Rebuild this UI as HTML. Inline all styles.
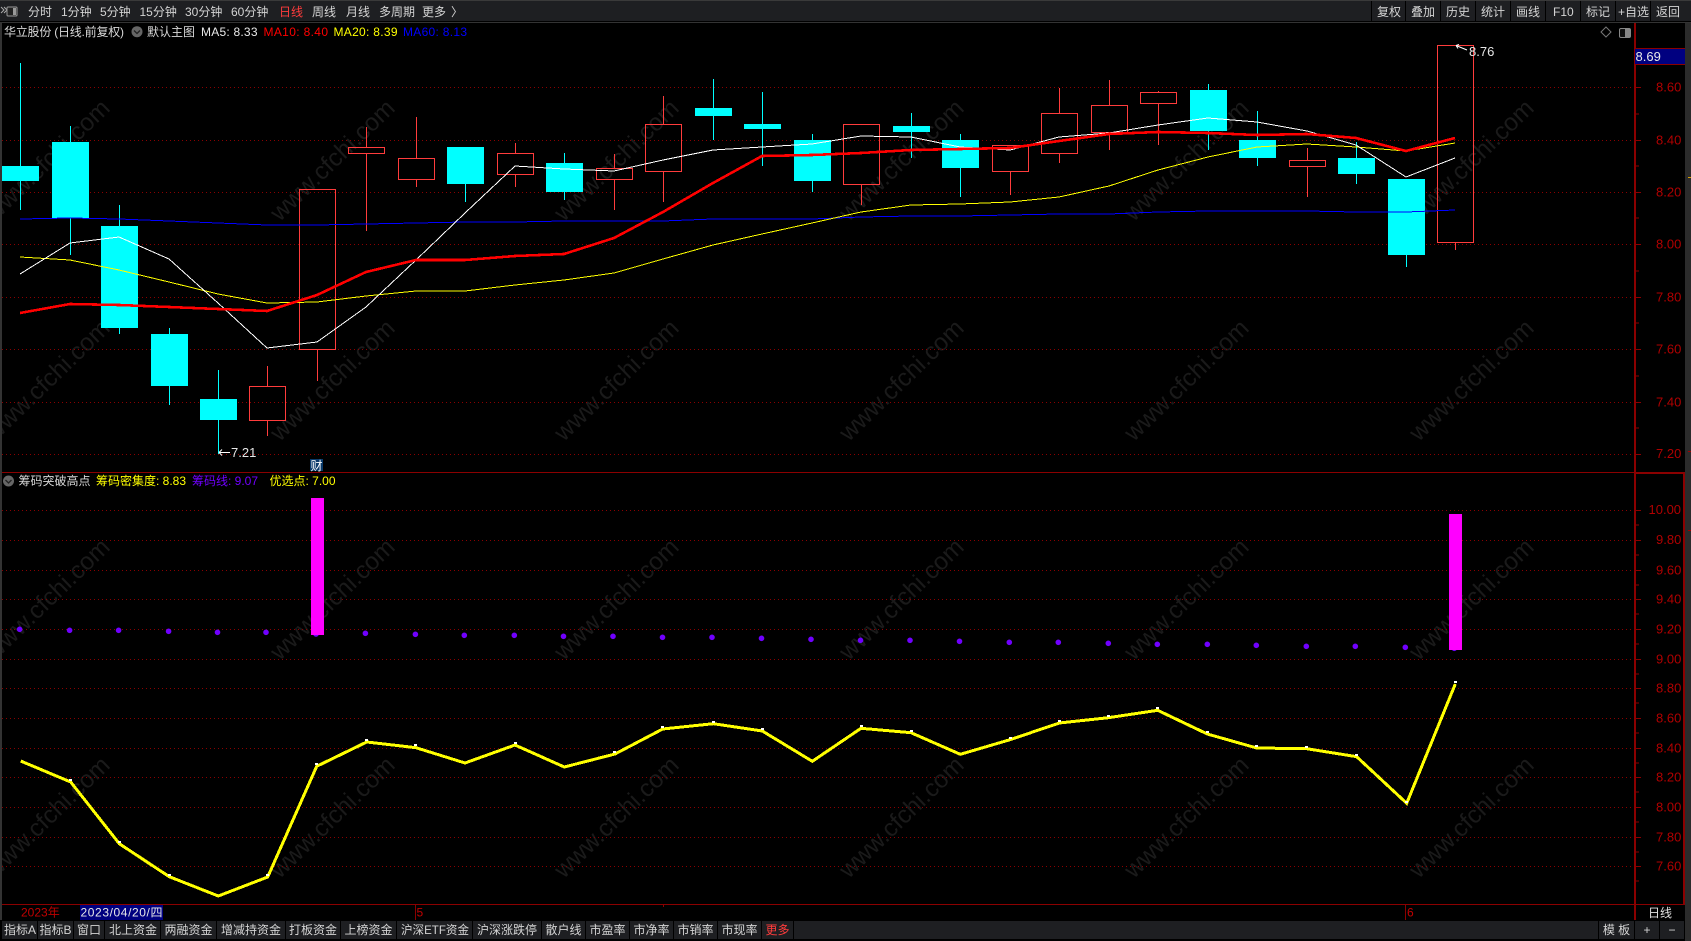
<!DOCTYPE html>
<html lang="zh">
<head>
<meta charset="utf-8">
<title>华立股份</title>
<style>
html,body{margin:0;padding:0;background:#000;width:1691px;height:941px;overflow:hidden}
svg{display:block}
text{font-family:"Liberation Sans","Noto Sans CJK SC",sans-serif;font-size:12px}
.c{shape-rendering:crispEdges}
.w text{font-size:24.5px;fill:#1a1a1a;text-anchor:middle}
.b{fill:#d4d4d4;text-anchor:middle}
.ax text{fill:#b00000;font-size:13px}
</style>
</head>
<body>
<svg width="1691" height="941" viewBox="0 0 1691 941" xmlns="http://www.w3.org/2000/svg">
<rect width="1691" height="941" fill="#000"/>

<!-- watermarks -->
<g class="w">
<text transform="translate(53,166) rotate(-44)">www.cfchi.com</text>
<text transform="translate(338,166) rotate(-44)">www.cfchi.com</text>
<text transform="translate(622,166) rotate(-44)">www.cfchi.com</text>
<text transform="translate(907,166) rotate(-44)">www.cfchi.com</text>
<text transform="translate(1192,166) rotate(-44)">www.cfchi.com</text>
<text transform="translate(1477,166) rotate(-44)">www.cfchi.com</text>
<text transform="translate(53,386) rotate(-44)">www.cfchi.com</text>
<text transform="translate(338,386) rotate(-44)">www.cfchi.com</text>
<text transform="translate(622,386) rotate(-44)">www.cfchi.com</text>
<text transform="translate(907,386) rotate(-44)">www.cfchi.com</text>
<text transform="translate(1192,386) rotate(-44)">www.cfchi.com</text>
<text transform="translate(1477,386) rotate(-44)">www.cfchi.com</text>
<text transform="translate(53,605) rotate(-44)">www.cfchi.com</text>
<text transform="translate(338,605) rotate(-44)">www.cfchi.com</text>
<text transform="translate(622,605) rotate(-44)">www.cfchi.com</text>
<text transform="translate(907,605) rotate(-44)">www.cfchi.com</text>
<text transform="translate(1192,605) rotate(-44)">www.cfchi.com</text>
<text transform="translate(1477,605) rotate(-44)">www.cfchi.com</text>
<text transform="translate(53,823) rotate(-44)">www.cfchi.com</text>
<text transform="translate(338,823) rotate(-44)">www.cfchi.com</text>
<text transform="translate(622,823) rotate(-44)">www.cfchi.com</text>
<text transform="translate(907,823) rotate(-44)">www.cfchi.com</text>
<text transform="translate(1192,823) rotate(-44)">www.cfchi.com</text>
<text transform="translate(1477,823) rotate(-44)">www.cfchi.com</text>
</g>

<!-- grids -->
<path class="c" fill="none" stroke="#8b0000" stroke-dasharray="1 3" d="M2 87.5H1634M2 140.5H1634M2 192.5H1634M2 244.5H1634M2 297.5H1634M2 349.5H1634M2 402.5H1634M2 454.5H1634M2 510.5H1634M2 540.5H1634M2 570.5H1634M2 599.5H1634M2 629.5H1634M2 659.5H1634M2 688.5H1634M2 718.5H1634M2 748.5H1634M2 777.5H1634M2 807.5H1634M2 837.5H1634M2 866.5H1634"/>

<!-- cyan candles -->
<g class="c">
<path fill="none" stroke="#00ffff" d="M20.5 63V210M70.5 126V255M119.5 205V334M169.5 328V405M218.5 370V454M465.5 147V202M564.5 153V200M713.5 79V140M762.5 92V166M812.5 134V192M911.5 113V158M960.5 134V197M1208.5 84V150M1257.5 111V166M1356.5 142V184M1406.5 179V267"/>
<g fill="#00ffff">
<rect x="2" y="166" width="37" height="15"/>
<rect x="52" y="142" width="37" height="76"/>
<rect x="101" y="226" width="37" height="102"/>
<rect x="151" y="334" width="37" height="52"/>
<rect x="200" y="399" width="37" height="21"/>
<rect x="447" y="147" width="37" height="37"/>
<rect x="546" y="163" width="37" height="29"/>
<rect x="695" y="108" width="37" height="8"/>
<rect x="744" y="124" width="37" height="5"/>
<rect x="794" y="140" width="37" height="41"/>
<rect x="893" y="126" width="37" height="6"/>
<rect x="942" y="140" width="37" height="28"/>
<rect x="1190" y="90" width="37" height="41"/>
<rect x="1239" y="140" width="37" height="18"/>
<rect x="1338" y="158" width="37" height="16"/>
<rect x="1388" y="179" width="37" height="76"/>
</g>
<!-- red candles -->
<path fill="none" stroke="#ff3c3c" d="M267.5 366V386M267.5 421V436M317.5 349V381M366.5 127V147M366.5 153V231M416.5 117V158M416.5 180V187M515.5 143V153M515.5 175V187M614.5 154V168M614.5 179V210M663.5 96V124M663.5 171V202M861.5 184V205M1010.5 171V195M1059.5 88V113M1059.5 153V163M1109.5 80V105M1109.5 132V150M1158.5 91V92M1158.5 103V145M1307.5 148V160M1307.5 166V197M1455.5 242V250"/>
<g fill="none" stroke="#ff3c3c">
<rect x="249.5" y="386.5" width="36" height="34"/>
<rect x="299.5" y="189.5" width="36" height="160"/>
<rect x="348.5" y="147.5" width="36" height="6"/>
<rect x="398.5" y="158.5" width="36" height="21"/>
<rect x="497.5" y="153.5" width="36" height="21"/>
<rect x="596.5" y="168.5" width="36" height="11"/>
<rect x="645.5" y="124.5" width="36" height="47"/>
<rect x="843.5" y="124.5" width="36" height="60"/>
<rect x="992.5" y="145.5" width="36" height="26"/>
<rect x="1041.5" y="113.5" width="36" height="40"/>
<rect x="1091.5" y="105.5" width="36" height="27"/>
<rect x="1140.5" y="92.5" width="36" height="11"/>
<rect x="1289.5" y="160.5" width="36" height="6"/>
<rect x="1437.5" y="45.5" width="36" height="197"/>
</g>
</g>

<!-- MA lines -->
<g class="c" fill="none">
<polyline stroke="#0000ff" points="20,219 70,218 119,219 169,221 218,223 267,225 317,225 366,224 416,223 465,222 515,222 564,221 614,221 663,221 713,219 762,219 812,219 861,217 911,216 960,216 1010,215 1059,214 1109,214 1158,212 1208,211 1257,211 1307,211 1356,212 1406,212 1455,210"/>
<polyline stroke="#ffff00" points="20,257 70,260 119,270 169,282 218,294 267,303 317,302 366,296 416,291 465,291 515,285 564,280 614,273 663,259 713,245 762,234 812,223 861,212 911,205 960,204 1010,202 1059,197 1109,186 1158,170 1208,157 1257,147 1307,144 1356,147 1406,151 1455,143"/>
<polyline stroke="#ffffff" points="20,274 70,243 119,237 169,259 218,303 267,348 317,342 366,307 416,260 465,213 515,166 564,169 614,171 663,160 713,150 762,147 812,144 861,136 911,137 960,147 1010,150 1059,137 1109,133 1158,125 1208,118 1257,122 1307,131 1356,145 1406,177 1455,158"/>
<polyline stroke="#ff0000" stroke-width="2.6" points="20,313 70,304 119,305 169,307 218,309 267,311 317,295 366,272 416,260 465,260 515,256 564,254 614,238 663,212 713,183 762,156 812,155 861,153 911,150 960,149 1010,148 1059,141 1109,134 1158,132 1208,133 1257,135 1307,134 1356,138 1406,151 1455,138"/>
</g>

<!-- high low marks -->
<path fill="none" stroke="#fff" d="M1456 45.5L1467 50M1456 45.5l3 -1M1456 45.5l2 3"/>
<text x="1469" y="56" fill="#e6e6e6" style="font-size:13px">8.76</text>
<path fill="none" stroke="#fff" d="M219 452.5H230M219 452.5l3 -3M219 452.5l3 3"/>
<text x="231" y="457" fill="#e6e6e6" style="font-size:13px">7.21</text>
<rect x="310" y="459" width="13" height="12" fill="#0a3a6a"/>
<text x="310.5" y="470" fill="#fff">财</text>

<!-- lower indicator -->
<g fill="#7000ff">
<circle cx="19.6" cy="629.3" r="2.8"/><circle cx="69.6" cy="630.3" r="2.8"/><circle cx="118.6" cy="630.3" r="2.8"/><circle cx="168.6" cy="631.3" r="2.8"/><circle cx="217.5" cy="632.3" r="2.8"/><circle cx="266" cy="632.3" r="2.8"/><circle cx="316" cy="634" r="2.8"/><circle cx="365.4" cy="633.3" r="2.8"/><circle cx="415.4" cy="634.3" r="2.8"/><circle cx="464.3" cy="635.3" r="2.8"/><circle cx="514.3" cy="635.3" r="2.8"/><circle cx="563.5" cy="636.3" r="2.8"/><circle cx="613" cy="636.3" r="2.8"/><circle cx="662.5" cy="637.3" r="2.8"/><circle cx="712" cy="637.3" r="2.8"/><circle cx="761.5" cy="638.3" r="2.8"/><circle cx="811" cy="639.3" r="2.8"/><circle cx="860.5" cy="640.3" r="2.8"/><circle cx="910" cy="640.3" r="2.8"/><circle cx="959.5" cy="641.3" r="2.8"/><circle cx="1009.3" cy="642.3" r="2.8"/><circle cx="1058.3" cy="642.3" r="2.8"/><circle cx="1108.3" cy="643.3" r="2.8"/><circle cx="1157.3" cy="644.3" r="2.8"/><circle cx="1207.3" cy="644.3" r="2.8"/><circle cx="1256.3" cy="645.3" r="2.8"/><circle cx="1306.3" cy="646.3" r="2.8"/><circle cx="1355.3" cy="646.3" r="2.8"/><circle cx="1405.3" cy="647.3" r="2.8"/><circle cx="1454.3" cy="648.3" r="2.8"/>
</g>
<rect class="c" x="311" y="498" width="13" height="137" fill="#ff00ff"/>
<rect class="c" x="1449" y="514" width="13" height="136" fill="#ff00ff"/>
<polyline class="c" fill="none" stroke="#ffff00" stroke-width="3" points="20.7,761 70.7,782 119.3,843.7 169.3,876.7 218.3,896 267.7,877 316.7,766.3 366.7,742 416,747.7 465,763 515,745 564.3,767 615,754 662.7,729 713.3,723.7 762.3,731 812.3,761.3 861,728.3 911,732.7 960.3,754.3 1010,739.7 1059.3,723 1108.3,717.7 1157.7,710.3 1207.3,734 1256.7,748 1306.7,748.7 1356.7,756.7 1406.7,803.3 1455.3,684"/>
<path class="c" fill="none" stroke="#fff" stroke-width="2" d="M69 780h3M118 842h3M168 875h3M266 875h3M315 764h3M365 740h3M414 745h3M514 743h3M613 752h3M661 727h3M712 722h3M761 729h3M860 726h3M910 731h3M1009 738h3M1058 721h3M1107 716h3M1156 708h3M1206 732h3M1255 746h3M1305 747h3M1355 755h3M1405 802h3M1454 682h3"/>

<!-- frame/axes -->
<g class="c">
<rect x="0" y="22" width="2" height="898" fill="#333"/>
<rect x="1685" y="22" width="6" height="919" fill="#2b2b2b"/>
<rect x="1688" y="177" width="3" height="1" fill="#d9a000"/>
<rect x="1688" y="451" width="3" height="1" fill="#a00000"/>
<rect x="1688" y="530" width="3" height="1" fill="#a00000"/>
<rect x="2" y="472" width="1682" height="1" fill="#8b0000"/>
<rect x="1634" y="472" width="51" height="2" fill="#8b0000"/>
<rect x="2" y="904" width="1683" height="1" fill="#8b0000"/>
<rect x="1634" y="23" width="2" height="897" fill="#8b0000"/>
<rect x="1683" y="472" width="2" height="433" fill="#8b0000"/>
<rect x="415" y="905" width="1" height="15" fill="#8b0000"/>
<rect x="1405" y="905" width="1" height="15" fill="#8b0000"/>
<rect x="663" y="904" width="1" height="3" fill="#8b0000"/>
<path fill="none" stroke="#8b0000" d="M1635 87.5h6M1635 140.5h6M1635 192.5h6M1635 244.5h6M1635 297.5h6M1635 349.5h6M1635 402.5h6M1635 454.5h6M1635 114h4M1635 166h4M1635 218h4M1635 271h4M1635 323h4M1635 376h4M1635 428h4M1635 510.5h6M1635 540.5h6M1635 570.5h6M1635 599.5h6M1635 629.5h6M1635 659.5h6M1635 688.5h6M1635 718.5h6M1635 748.5h6M1635 777.5h6M1635 807.5h6M1635 837.5h6M1635 866.5h6M1635 525h4M1635 555h4M1635 585h4M1635 614h4M1635 644h4M1635 674h4M1635 703h4M1635 733h4M1635 763h4M1635 792h4M1635 822h4M1635 852h4M1635 881h4"/>
<rect x="1635" y="49" width="50" height="15" fill="#000080"/>
<path fill="none" stroke="#8b0000" d="M1635 48.5h50M1635 64.5h50"/>
</g>
<text x="1635.5" y="61" fill="#e8e8e8" style="font-size:13px">8.69</text>
<g class="ax">
<text x="1656" y="91.5">8.60</text><text x="1656" y="144.5">8.40</text><text x="1656" y="196.5">8.20</text><text x="1656" y="248.5">8.00</text><text x="1656" y="301.5">7.80</text><text x="1656" y="353.5">7.60</text><text x="1656" y="406.5">7.40</text><text x="1656" y="458">7.20</text>
<text x="1648.5" y="514">10.00</text><text x="1656" y="544">9.80</text><text x="1656" y="574.5">9.60</text><text x="1656" y="603.5">9.40</text><text x="1656" y="633.5">9.20</text><text x="1656" y="663.5">9.00</text><text x="1656" y="692.5">8.80</text><text x="1656" y="722.5">8.60</text><text x="1656" y="752.5">8.40</text><text x="1656" y="781.5">8.20</text><text x="1656" y="811.5">8.00</text><text x="1656" y="841.5">7.80</text><text x="1656" y="870.5">7.60</text>
</g>

<!-- top bar -->
<rect class="c" x="0" y="0" width="1691" height="21" fill="#1e1f22"/>
<rect class="c" x="0" y="0" width="1691" height="1" fill="#3a3a3a"/>
<rect class="c" x="0" y="22" width="1691" height="1" fill="#333"/>
<path class="c" fill="none" stroke="#000" d="M1371.5 1V21M1405.5 1V21M1440.5 1V21M1475.5 1V21M1510.5 1V21M1545.5 1V21M1580.5 1V21M1615.5 1V21M1650.5 1V21"/>
<path fill="none" stroke="#aaa" d="M1 7l3 3-3 3M4 7l3 3-3 3"/>
<rect x="7" y="7" width="10" height="9" rx="1" fill="#222" stroke="#999"/>
<rect x="13" y="8" width="3" height="7" fill="#999"/>
<g fill="#d4d4d4">
<text x="28" y="16">分时</text><text x="61" y="16">1分钟</text><text x="100" y="16">5分钟</text><text x="139.5" y="16">15分钟</text><text x="185" y="16">30分钟</text><text x="231" y="16">60分钟</text><text x="279" y="16" fill="#ff3c3c">日线</text><text x="312" y="16">周线</text><text x="346" y="16">月线</text><text x="379" y="16">多周期</text><text x="422" y="16">更多</text><text x="451" y="16">〉</text>
<text x="1377" y="16">复权</text><text x="1411" y="16">叠加</text><text x="1446" y="16">历史</text><text x="1481" y="16">统计</text><text x="1516" y="16">画线</text><text x="1553" y="16">F10</text><text x="1586" y="16">标记</text><text x="1618" y="16">+自选</text><text x="1656" y="16">返回</text>
</g>

<!-- main title -->
<text x="4" y="36" fill="#d8d8d8" textLength="120" lengthAdjust="spacing">华立股份 (日线.前复权)</text>
<circle cx="137" cy="31.7" r="5.5" fill="#666"/>
<path fill="none" stroke="#222" stroke-width="1.3" d="M134 30.5l3 3 3-3"/>
<text x="147" y="36" fill="#d8d8d8">默认主图</text>
<text x="201" y="36" fill="#e8e8e8" textLength="56.5">MA5: 8.33</text>
<text x="263.5" y="36" fill="#ff0000" textLength="64.5">MA10: 8.40</text>
<text x="333.5" y="36" fill="#ffff00" textLength="64">MA20: 8.39</text>
<text x="403" y="36" fill="#0000ff" textLength="64">MA60: 8.13</text>
<path fill="none" stroke="#777" d="M1606 27l5 5-5 5-5-5z"/>
<rect x="1619.5" y="28.5" width="11" height="9" rx="1.5" fill="#111" stroke="#888"/>
<rect x="1625" y="29" width="5" height="8" fill="#888"/>

<!-- indicator title -->
<circle cx="8.5" cy="481" r="5.5" fill="#666"/>
<path fill="none" stroke="#222" stroke-width="1.3" d="M5.5 480l3 3 3-3"/>
<text x="18.5" y="485" fill="#d8d8d8">筹码突破高点</text>
<text x="96" y="485" fill="#ffff00">筹码密集度: 8.83</text>
<text x="192" y="485" fill="#7000ff">筹码线: 9.07</text>
<text x="269.5" y="485" fill="#ffff00">优选点: 7.00</text>

<!-- date row -->
<text x="21" y="916.5" fill="#c00000">2023年</text>
<rect class="c" x="80" y="905" width="83" height="15" fill="#000080"/>
<text x="80.5" y="916.5" fill="#e8e8e8" textLength="82">2023/04/20/四</text>
<text x="416.5" y="916.5" fill="#c00000">5</text>
<text x="1407" y="916.5" fill="#c00000">6</text>
<text x="1648" y="917" fill="#e0e0e0">日线</text>

<!-- bottom tabs -->
<rect class="c" x="2" y="921" width="1682" height="18" fill="#1e1f22"/>
<path class="c" fill="none" stroke="#000" d="M37.5 921V939M73.5 921V939M104.5 921V939M160.5 921V939M216.5 921V939M285.5 921V939M340.5 921V939M396.5 921V939M472.5 921V939M541.5 921V939M585.5 921V939M629.5 921V939M673.5 921V939M717.5 921V939M761.5 921V939M793.5 921V939M1598.5 921V939M1634.5 921V939M1659.5 921V939"/>
<g class="b">
<text x="20" y="934">指标A</text><text x="55.5" y="934">指标B</text><text x="89" y="934">窗口</text><text x="133" y="934">北上资金</text><text x="188.5" y="934">两融资金</text><text x="251" y="934">增减持资金</text><text x="313" y="934">打板资金</text><text x="368.5" y="934">上榜资金</text><text x="435" y="934" textLength="68" lengthAdjust="spacingAndGlyphs">沪深ETF资金</text><text x="507" y="934">沪深涨跌停</text><text x="563.5" y="934">散户线</text><text x="607.5" y="934">市盈率</text><text x="651.5" y="934">市净率</text><text x="695.5" y="934">市销率</text><text x="739.5" y="934">市现率</text><text x="777.5" y="934" fill="#ff3c3c">更多</text>
<text x="1616.5" y="934">模 板</text><text x="1647" y="934">+</text><text x="1672" y="934">−</text>
</g>
</svg>
</body>
</html>
